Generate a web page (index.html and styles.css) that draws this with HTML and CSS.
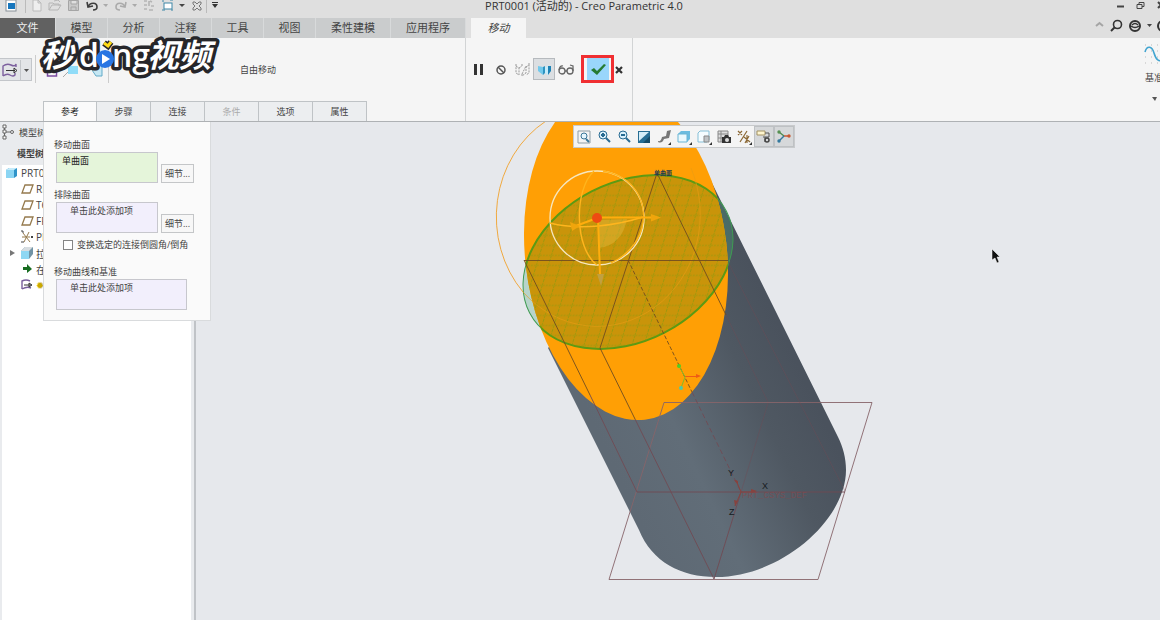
FILE: index.html
```html
<!DOCTYPE html>
<html lang="zh-CN">
<head>
  <meta charset="UTF-8" />
  <meta name="viewport" content="width=device-width, initial-scale=1.0" />
  <title>PRT0001 (活动的) - Creo Parametric 4.0</title>
  <link rel="stylesheet" href="styles.css">
</head>
<body>
<div class="app">
  <header class="titlebar">
    <div class="quick">
      <svg width="222" height="18" viewBox="8 0 222 18" fill="none">
        <rect x="6" y="0" width="10" height="11" fill="#fff" stroke="#8a9299"/>
        <rect x="8" y="3" width="7" height="6" fill="#1676bd"/>
        <path d="M25.500 0V13M206.500 0V13" stroke="#bbb"/>
        <path d="M33 0h5l3 3v8h-8zM38 0v3h3" fill="#eee" stroke="#bbb"/>
        <path d="M49 10V3h4l1 1h5v2M49 10l3-5h9l-3 5zM54 1l4-1 2 2" stroke="#b5b5b5"/>
        <path d="M68.500 .5h10v10h-10zM71 1v3h6V1M71 11V7h5v4" fill="#c9c9c9" stroke="#a5a5a5"/>
        <path d="M88 7c2-5 9-5 9 0 0 2-2 3-4 3M87 2l1 5 5-1" stroke="#3d3d3d" stroke-width="1.600"/>
        <path d="M125 7c-2-5-9-5-9 0 0 2 2 3 4 3M126 2l-1 5-5-1" stroke="#aaa" stroke-width="1.600"/>
        <path d="M103 4h5l-2 3zM132 4h5l-2 3z" fill="#aaa"/>
        <path d="M144 1h3M144 5h3M144 9h3M149 1v5M149 10h4M152 2l-2-1M151 6h3" stroke="#b5b5b5" stroke-width="1.600"/>
        <rect x="164" y="3" width="8" height="6" fill="#fff" stroke="#3e87a7"/>
        <path d="M162 1h2M170 0h3M162 10h3M171 10h2" stroke="#3e87a7"/>
        <path d="M179 4h6l-3 3z" fill="#444"/>
        <path d="M193 2h2l2 2 2-2h2v2l-2 2 2 2v2h-2l-2-2-2 2h-2V8l2-2-2-2z" stroke="#777"/>
        <path d="M212 4h6l-3 4zM212 2h6v1h-6z" fill="#333"/>
      </svg>
    </div>
    <h1>PRT0001 (活动的) - Creo Parametric 4.0</h1>
    <div class="window-tools">
      <svg width="48" height="12" viewBox="1112 0 48 12" fill="none" stroke="#444">
        <path d="M1117 6.500h7" stroke-width="2"/>
        <path d="M1137 4.500h5v4h-5zM1139 4V2.500h5v4h-2"/>
        <path d="M1158 2l6 6M1158 8l6-6" stroke-width="2"/>
      </svg>
    </div>
  </header>

  <nav class="tabs">
    <button class="tab file">文件</button>
    <button class="tab">模型</button>
    <button class="tab">分析</button>
    <button class="tab">注释</button>
    <button class="tab">工具</button>
    <button class="tab">视图</button>
    <button class="tab wide">柔性建模</button>
    <button class="tab wide">应用程序</button>
    <button class="tab active">移动</button>
    <svg class="tab-tools" width="68" height="18" viewBox="1092 18 68 18" fill="none" stroke="#333">
      <path d="M1096 26l3.500-3 3.500 3" stroke="#a5a5a5" stroke-width="2"/>
      <circle cx="1117.500" cy="24.500" r="4" stroke-width="1.600"/>
      <path d="M1115 27l-4 4" stroke-width="2"/>
      <circle cx="1135" cy="26" r="5" stroke-width="2"/>
      <path d="M1131 26q4 3 8 0M1132 25q3-3 6 0" stroke-width="1.500"/>
      <path d="M1147 24h5l-2.500 3z" fill="#444" stroke="none"/>
      <circle cx="1163" cy="26" r="5" stroke-width="2"/>
    </svg>
  </nav>

  <section class="ribbon">
    <div class="group options">
      <div class="row">
        <button class="type-button" aria-label="移动类型">
          <svg width="32" height="22" viewBox="0 58 32 22" fill="none">
            <path d="M20.500 59v20" stroke="#c3c6ca"/>
            <path d="M3 75V65q4-3 8-1t5-1v3M3 75q4-3 7-1t5 0v-2" stroke="#7d619f" stroke-width="1.400"/>
            <path d="M6 69.500h9M14 67l3 2.500-3 2.500z" stroke="#333"/>
            <path d="M24 68h5l-2.500 3z" fill="#555"/>
          </svg>
        </button>
        <svg width="76" height="28" viewBox="34 55 76 28" fill="none">
          <path d="M35.500 55v28M108.500 55v28" stroke="#ccc"/>
          <path d="M47.500 68v8h9v-8z" stroke="#7b4ca0" stroke-width="1.500"/>
          <path d="M63 77l5-5" stroke="#aaa"/>
          <path d="M68 66h10v8h-10z" fill="#90dcf8"/>
          <path d="M92 70l4 6h6V67" fill="#c6e7f3" stroke="#63abc9"/>
        </svg>
        <span class="mode">自由移动</span>
      </div>
      <div class="subtabs">
        <button class="subtab current">参考</button>
        <button class="subtab">步骤</button>
        <button class="subtab">连接</button>
        <button class="subtab" disabled>条件</button>
        <button class="subtab">选项</button>
        <button class="subtab">属性</button>
      </div>
    </div>

    <div class="group controls">
      <div class="row">
        <button class="tool" aria-label="暂停"><svg width="22" height="22"><path d="M7 6h3v11H7zM13 6h3v11h-3z" fill="#333"/></svg></button>
        <button class="tool" aria-label="无预览"><svg width="22" height="22" fill="none" stroke="#555" stroke-width="1.500"><circle cx="12" cy="12" r="4"/><path d="M9 9l6 6"/></svg></button>
        <button class="tool" aria-label="分离预览"><svg width="22" height="22" fill="none" stroke="#999"><path d="M5 8l3 2v7l-3-2zM8 10l3-2M11 16l4-8v7l-4 3zM15 9l3-2v8l-3 2M4 7h2M10 7h2M17 6h2" stroke-dasharray="2 1"/></svg></button>
        <button class="tool pressed" aria-label="连接预览"><svg width="20" height="20"><path d="M4 7l5 1v8l-5-4z" fill="#72c9ec"/><path d="M9 8l2-1v7l-2 2z" fill="#2e93c0"/><path d="M11 8l3-1v9l-3-2z" fill="#c5ecfa"/><path d="M14 7h3v5l-3 4z" fill="#1e82b5"/></svg></button>
        <button class="tool" aria-label="预览"><svg width="22" height="22" fill="none" stroke="#666" stroke-width="1.300"><circle cx="7" cy="13" r="3"/><circle cx="15" cy="13" r="3"/><path d="M4 12q1-5 4-4M18 13V8l-3-1M10 13h2"/></svg></button>
        <div class="confirm">
          <button class="accept" aria-label="确定"><svg width="22" height="22"><path d="M4 12l3-2 3 3 7-7 2 1-9 10z" fill="#267b32"/></svg></button>
        </div>
        <button class="cancel" aria-label="取消"><svg width="10" height="12"><path d="M2 4l6 6M8 4l-6 6" stroke="#333" stroke-width="2.200"/></svg></button>
      </div>
    </div>

    <div class="group datum">
      <svg width="22" height="22" viewBox="1143 43 22 22" fill="none">
        <path d="M1145 45h18M1145 51h18M1145 57h18M1145 63h18" stroke="#bbb" stroke-dasharray="1 5"/>
        <path d="M1145 52c2-7 7-6 9 1s5 9 9 7" stroke="#43a5d0" stroke-width="1.600"/>
      </svg>
      <span>基准</span>
      <svg width="22" height="8"><path d="M9 1h5l-2 4z" fill="#555"/></svg>
    </div>
  </section>

  <main class="work">
    <aside class="tree">
      <div class="tree-tab">
        <svg width="15" height="16" fill="none" stroke="#666"><path d="M4.500 3v10M6 8h4"/><path d="M3 1h3v3H3zM3 6h3v3H3zM3 12h3v3H3z" fill="#fff"/><circle cx="12" cy="8" r="1.500"/></svg>
        模型树
      </div>
      <div class="tree-title">模型树</div>
      <ul>
        <li class="root"><svg width="16" height="16"><path d="M3 5l3-2h8v8l-3 2H3z" fill="#2f94c9"/><path d="M3 5h8v8H3z" fill="#8bd5f3"/><path d="M3 5l3-2h8l-3 2z" fill="#c4ebfa"/></svg>PRT0001.PRT</li>
        <li><svg width="16" height="16" fill="none" stroke="#957a4d" stroke-width="1.300"><path d="M6 4h8l-3 8H3z"/></svg>RIGHT</li>
        <li><svg width="16" height="16" fill="none" stroke="#957a4d" stroke-width="1.300"><path d="M6 4h8l-3 8H3z"/></svg>TOP</li>
        <li><svg width="16" height="16" fill="none" stroke="#957a4d" stroke-width="1.300"><path d="M6 4h8l-3 8H3z"/></svg>FRONT</li>
        <li><svg width="16" height="16" fill="none" stroke="#957a4d"><path d="M4 4l7 9M10 3l-5 10M3 8h8"/><path d="M2 2h2v2M2 13h3M12 7l2 2M14 7l-2 2" stroke="#444"/></svg>PRT_CSYS_DEF</li>
        <li class="parent"><svg width="9" height="16"><path d="M1 5l5 3-5 3z" fill="#777"/></svg><svg width="16" height="16"><path d="M2 6l4-4h8v7l-4 5H2z" fill="#7193a5"/><path d="M2 6h8v8H2z" fill="#8ed7f3"/><path d="M2 6l4-4h8l-4 4z" fill="#d7dde1"/></svg>拉伸 1</li>
        <li><svg width="16" height="16"><path d="M4 6h4V3l5 5-5 4v-3H4z" fill="#176c20"/></svg>在此插入</li>
        <li><svg width="16" height="16" fill="none"><path d="M3 12V4q4-2 8 0M3 12q5-3 9-1" stroke="#79609c" stroke-width="1.400"/><path d="M5 8h7M10 6l3 2-3 2z" stroke="#333"/></svg><span class="star">✹</span>移动 1</li>
      </ul>
    </aside>

    <section class="canvas">
      <svg class="model" viewBox="196 122 964 498" preserveAspectRatio="xMidYMin meet" fill="none">
        <defs>
          <linearGradient id="steel" gradientUnits="userSpaceOnUse" x1="610" y1="460" x2="800" y2="370">
            <stop offset="0" stop-color="#5e6974"/>
            <stop offset=".35" stop-color="#616d78"/>
            <stop offset=".75" stop-color="#4f5862"/>
            <stop offset="1" stop-color="#4a525d"/>
          </linearGradient>
          <pattern id="mesh" width="12" height="10" patternUnits="userSpaceOnUse" patternTransform="skewX(-17)">
            <path d="M0 5.500h12M5.500 0v10" stroke="#6d9d10" stroke-opacity=".6" stroke-width=".8" stroke-dasharray="2 1"/>
          </pattern>
          <clipPath id="face"><ellipse cx="626" cy="254" rx="166.700" ry="100.900" transform="rotate(83.500 626 254)"/></clipPath>
          <clipPath id="cut"><ellipse cx="628" cy="262" rx="110.800" ry="79.400" transform="rotate(-27.300 628 262)"/></clipPath>
        </defs>

        <!-- cylinder body -->
        <path d="M548 348L639 530C652 562 681 577 716 577C781 577 846 520 846 470C846 458 843 447 838 437L711 181z" fill="url(#steel)"/>
        <ellipse cx="628" cy="262" rx="110.800" ry="79.400" transform="rotate(-27.300 628 262)" fill="#4ba77c" fill-opacity=".3" stroke="#3f9c52"/>
        <!-- slanted face -->
        <ellipse cx="626" cy="254" rx="166.700" ry="100.900" transform="rotate(83.500 626 254)" fill="#ff9f05"/>
        <g clip-path="url(#face)">
          <ellipse cx="628" cy="262" rx="110.800" ry="79.400" transform="rotate(-27.300 628 262)" fill="#c9940a" stroke="#5c9a13" stroke-width="2"/>
          <g clip-path="url(#cut)">
            <path d="M520 170h216v182H520z" fill="url(#mesh)"/>
          </g>
        </g>
        <path d="M546 121A103 112 0 0 0 523 292" stroke="#f0a12d" stroke-width=".9"/>
        <path d="M523 292A103 112 0 0 0 691 168" stroke="#e89c14" stroke-opacity=".7" stroke-width=".9"/>

        <!-- datum planes and axis -->
        <g stroke="#704d20" stroke-width=".9">
          <path d="M524 260.500h204M657 173l-57 175M657 173l69 142M524 260l66 135M600 348l35 71"/>
          <path d="M628 260l64 132" stroke-dasharray="4 2"/>
        </g>
        <g stroke="#714b54" stroke-width=".9">
          <path d="M664 402.500h208L818 579.500H609z" stroke="#87646a"/>
          <path d="M590 395l47 97h208M635 419l79 160 27-87"/>
          <path d="M741 492l27-89M728 262l117 229M726 315l42 87" stroke-opacity=".45"/>
          <path d="M692 392l49 100" stroke-dasharray="5 3"/>
        </g>

        <!-- 3D dragger -->
        <path d="M598 220l29-1q-5 26-28 29z" fill="#e6bd43" fill-opacity=".4"/>
        <circle cx="597" cy="218" r="47" stroke="#f6e7c0" stroke-width="1.300"/>
        <path d="M594 171c-20 18-20 77 3 94M603 171c50 8 55 70 8 92M550 223c30 8 68 2 93-6" stroke="#ffb51d" stroke-width="1.400"/>
        <path d="M597 217.500h56M598 218l2 56M597 218l-24 9" stroke="#ffad0d" stroke-width="2"/>
        <path d="M651 214l10 3.500-10 4zM570 222l10 4-8 5z" fill="#f0a50c"/>
        <path d="M597 274h7l-3 12z" fill="#c0a041"/>
        <circle cx="597" cy="218" r="5" fill="#ee4b12"/>

        <!-- coordinate systems -->
        <path d="M685 376.500h12" stroke="#ee5b16"/><path d="M696 374l5 2-5 2z" fill="#ee5b16"/>
        <path d="M679 366l6 11-4 11" stroke="#80bd29"/>
        <circle cx="679" cy="366" r="2" fill="#4fcd25"/><circle cx="681" cy="388" r="2" fill="#50c9a4"/>
        <path d="M741 492l-5-12M741 492h15M741 492l-6 14" stroke="#87433f"/>
        <path d="M751 489l6 2-6 2zM734 480l4 1v4zM734 500l4 1-3 5z" fill="#87433f"/>
        <g class="axis-label">
          <text x="728" y="476">Y</text>
          <text x="762" y="489">X</text>
          <text x="729" y="515">Z</text>
        </g>
        <text class="csys-label" x="742" y="498">PRT_CSYS_DEF</text>
        <text class="surface-label" x="654" y="175">单曲面</text>

        <path d="M992 249v11l3-2 2 5 2-1-2-5h3z" fill="#111" stroke="#fff" stroke-width=".5"/>
      </svg>

      <div class="view-tools">
        <button aria-label="重新调整"><svg width="18" height="18" fill="none"><path d="M3 3h12v12H3z" stroke="#8e9da5"/><circle cx="9" cy="8" r="3" fill="#e5f5fd" stroke="#397596"/><path d="M11 11l3 3" stroke="#397596" stroke-width="2"/></svg></button>
        <button aria-label="放大"><svg width="18" height="18" fill="none" stroke="#286a91"><circle cx="8" cy="7" r="4" fill="#daf0fb"/><path d="M6 7h4M8 5v4M11 10l4 4" stroke-width="2"/></svg></button>
        <button aria-label="缩小"><svg width="18" height="18" fill="none" stroke="#286a91"><circle cx="8" cy="7" r="4" fill="#daf0fb"/><path d="M6 7h4M11 10l4 4" stroke-width="2"/></svg></button>
        <button aria-label="重画"><svg width="18" height="18"><path d="M3 3h12v12H3z" fill="#276d93"/><path d="M4 4h10L4 13z" fill="#d4edf8"/><path d="M15 8v7H8z" fill="#174c69"/></svg></button>
        <button aria-label="渲染选项"><svg width="18" height="18"><path d="M3 13q3 1 4-4l4-1 1-5 4-1-2 8-5 1q-2 5-6 3z" fill="#777"/><path d="M16 14v3h-3z" fill="#333"/></svg></button>
        <button aria-label="显示样式"><svg width="18" height="18"><path d="M3 6l3-3h9v8l-3 3H3z" fill="#6bbce0"/><path d="M3 6h9v8H3z" fill="#eaf8fd" stroke="#6bb5d4"/><path d="M17 14v3h-3z" fill="#333"/></svg></button>
        <button aria-label="已保存方向"><svg width="18" height="18" fill="none"><path d="M3 5l2-2h9v9l-2 2H3z" fill="#f5fcff" stroke="#86bfd7"/><path d="M9 8h5v6H9z" fill="#bfc3c6" stroke="#888"/><path d="M17 14v3h-3z" fill="#333"/></svg></button>
        <button aria-label="视图管理器"><svg width="18" height="18"><path d="M3 3h10v11H3z" fill="#ddd" stroke="#888"/><path d="M3 6h10M3 10h10M6 3v11" stroke="#888"/><path d="M7 9h2l1-2h3l1 2h2v6H7z" fill="#333"/><circle cx="12" cy="12" r="2" fill="#ddd"/></svg></button>
        <button aria-label="基准显示"><svg width="18" height="18" fill="none" stroke="#8b6835"><path d="M3 3l4 4M7 3L3 7M5 14l7-11M9 9l6 5M14 8l-4 7M12 7v8" stroke-width="1.200"/><path d="M17 14v3h-3z" fill="#333" stroke="none"/></svg></button>
        <button class="on" aria-label="注释显示"><svg width="18" height="18" fill="none"><path d="M2 3h8v4H2z" fill="#fff6cf" stroke="#a39264"/><path d="M10 5h4v4H8M10 9v5" stroke="#555"/><circle cx="12" cy="12" r="2" stroke="#444" stroke-width="1.500"/></svg></button>
        <button class="on" aria-label="旋转中心"><svg width="18" height="18" fill="none"><path d="M4 4l5 4" stroke="#4c8c4d" stroke-width="1.500"/><path d="M9 8h6" stroke="#c85832" stroke-width="1.500"/><path d="M9 8l-5 5" stroke="#34799e" stroke-width="1.500"/><circle cx="4" cy="4" r="1.700" fill="#569052"/><circle cx="14" cy="8" r="1.700" fill="#c85832"/><circle cx="4" cy="13" r="1.700" fill="#34799e"/></svg></button>
      </div>
    </section>

    <form class="panel">
      <label for="move-surface">移动曲面</label>
      <div class="field">
        <textarea id="move-surface" class="filled" readonly>单曲面</textarea>
        <button type="button">细节...</button>
      </div>
      <label for="exclude-surface">排除曲面</label>
      <div class="field">
        <textarea id="exclude-surface" readonly>单击此处添加项</textarea>
        <button type="button">细节...</button>
      </div>
      <label class="check"><input type="checkbox">变换选定的连接倒圆角/倒角</label>
      <label for="move-curve">移动曲线和基准</label>
      <div class="field">
        <textarea id="move-curve" class="long" readonly>单击此处添加项</textarea>
      </div>
    </form>
  </main>

  <svg class="watermark" width="182" height="52" viewBox="38 32 182 52">
    <g class="brand">
      <text x="41" y="67" class="cjk">秒</text>
      <text x="79" y="67" class="latin">d</text>
      <text x="112" y="67" class="latin">ng</text>
      <text x="147" y="67" class="cjk">视频</text>
    </g>
    <circle cx="105" cy="59" r="9" fill="#2876e3"/>
    <path d="M102 54v10l8-5z" fill="#fff"/>
    <path d="M104 43l4 3 3-4" fill="none" stroke="#26262a" stroke-width="6"/>
    <path d="M104 43l4 3 3-4" fill="none" stroke="#ffdc17" stroke-width="3"/>
  </svg>
</div>
</body>
</html>
```

FILE: styles.css
```css
* {
  box-sizing: border-box;
}
body {
  margin: 0;
  font-family: "Open Sans", "Noto Sans CJK SC", sans-serif;
  font-size: 9px;
  color: #444;
  background: #e6e8ec;
}
button {
  font: inherit;
  color: inherit;
  padding: 0;
  margin: 0;
  border: 0;
  background: transparent;
}
svg {
  display: block;
  flex-shrink: 0;
}
.app {
  position: relative;
  display: flex;
  flex-direction: column;
  height: 100vh;
  overflow: hidden;
}

/* title bar */
.titlebar {
  display: grid;
  grid-template-columns: 1fr auto 1fr;
  height: 18px;
  padding-left: 8px;
  background: #dfdfdf;
}
.quick svg {
  overflow: visible;
}
.titlebar h1 {
  margin: 0;
  font-size: 11px;
  line-height: 12px;
  font-weight: normal;
  color: #333;
  white-space: nowrap;
}
.window-tools {
  justify-self: end;
}

/* ribbon tabs */
.tabs {
  display: flex;
  height: 20px;
  background: #dfdfdf;
}
.tab {
  width: 52px;
  font-size: 11px;
  line-height: 18px;
  background: #cacccd;
  border-right: 1px solid #d8dadb;
}
.tab.file {
  width: 56px;
  color: #eee;
  background: #616161;
}
.tab.wide {
  width: 75px;
}
.tab.active {
  width: 55px;
  margin-left: 5px;
  font-style: italic;
  background: #f5f5f5;
  border: 0;
}
.tab-tools {
  margin-left: auto;
}

/* ribbon */
.ribbon {
  display: flex;
  height: 84px;
  background: #f5f5f5;
  border-bottom: 1px solid #aeb1b4;
  overflow: hidden;
}
.group {
  display: flex;
  flex-direction: column;
  padding-top: 17px;
}
.row {
  display: flex;
  align-items: center;
  height: 28px;
}
.options {
  width: 466px;
  border-right: 1px solid #d2d4d5;
}
.type-button {
  width: 32px;
  height: 23px;
  margin-right: 2px;
  background: #e3e5e8;
  border: 1px solid #c3c6ca;
  border-left: 0;
}
.mode {
  margin-left: 130px;
}
.subtabs {
  display: flex;
  margin-top: auto;
  padding-left: 43px;
}
.subtab {
  width: 54px;
  height: 20px;
  background: #eceef0;
  border: 1px solid #bfc3c6;
  border-bottom: 0;
  border-left-width: 0;
}
.subtab.current {
  color: #222;
  background: #fafafa;
  border-left-width: 1px;
}
.subtab:disabled {
  color: #aaa;
}
.controls {
  width: 167px;
  padding-left: 1px;
  border-right: 1px solid #d2d4d5;
}
.tool {
  width: 22px;
  height: 22px;
}
.tool.pressed {
  background: #dcdfe2;
  border: 1px solid #b6babe;
}
.confirm {
  display: flex;
  align-items: center;
  justify-content: center;
  width: 33px;
  height: 28px;
  margin-left: 4px;
  border: 3px solid #f02f32;
}
.accept {
  width: 22px;
  height: 22px;
  background: #99d6fb;
}
.datum {
  width: 17px;
  margin-left: auto;
  padding-top: 5px;
  white-space: nowrap;
}
.datum span {
  margin: 6px 2px 12px;
}

/* model tree */
.work {
  position: relative;
  display: flex;
  flex: 1;
  min-height: 0;
}
.tree {
  display: flex;
  flex-direction: column;
  width: 196px;
  background: #e9ebee;
  border-right: 2px solid #c0c3c7;
}
.tree-tab {
  display: flex;
  align-items: center;
  gap: 4px;
  height: 20px;
}
.tree-title {
  height: 23px;
  padding-left: 17px;
  line-height: 23px;
  font-weight: bold;
}
.tree ul {
  flex: 1;
  margin: 0 3px 0 2px;
  padding: 0;
  list-style: none;
  background: #fff;
}
.tree li {
  display: flex;
  align-items: center;
  width: 41px;
  height: 16px;
  padding-left: 17px;
  gap: 1px;
  font-size: 10px;
  white-space: nowrap;
  overflow: hidden;
}
.tree .root {
  padding-left: 1px;
  gap: 2px;
}
.tree .parent {
  padding-left: 7px;
}
.star {
  color: #c9a900;
}

/* graphics area */
.canvas {
  position: relative;
  flex: 1;
  min-width: 0;
  background: #e6e8ec;
}
.model {
  width: 100%;
  height: 100%;
}
.axis-label {
  font: 9px "Liberation Sans", sans-serif;
  fill: #151a20;
}
.csys-label {
  font: 9px "Liberation Mono", monospace;
  fill: #85484c;
  fill-opacity: .7;
}
.surface-label {
  font-size: 6px;
  font-weight: bold;
  fill: #243c50;
}
.view-tools {
  position: absolute;
  top: 3px;
  left: 377px;
  display: flex;
  gap: 2px;
  padding: 1px;
  background: #f4f4f4;
  border: 1px solid #c8cacc;
}
.view-tools button {
  width: 18px;
  height: 19px;
}
.view-tools .on {
  background: #d6d8da;
  outline: 1px solid #bec1c4;
}

/* reference panel */
.panel {
  position: absolute;
  top: 0;
  left: 43px;
  width: 168px;
  padding: 15px 12px 6px;
  background: #fafafa;
  border: 1px solid #d9dbdd;
  border-top: 0;
}
.panel label {
  display: block;
  line-height: 15px;
  margin-left: -2px;
}
.field {
  display: flex;
  align-items: flex-end;
  gap: 3px;
  margin-bottom: 4px;
}
.field textarea {
  display: block;
  width: 102px;
  height: 31px;
  padding: 1px 13px;
  font: inherit;
  line-height: 13px;
  color: #444;
  background: #f2effc;
  border: 1px solid #c7c7cd;
  border-radius: 0;
  resize: none;
  overflow: hidden;
}
.field .filled {
  padding-left: 5px;
  color: #222;
  background: #e5f5da;
}
.field .long {
  width: 131px;
}
.field button {
  width: 33px;
  height: 19px;
  background: #f7f7f7;
  border: 1px solid #c4c6c8;
}
.panel .check {
  display: flex;
  align-items: center;
  gap: 4px;
  margin: 4px 0 12px 7px;
  white-space: nowrap;
}
.check input {
  appearance: none;
  width: 10px;
  height: 10px;
  margin: 0;
  background: #fff;
  border: 1px solid #858585;
}

/* video watermark */
.watermark {
  position: absolute;
  top: 32px;
  left: 38px;
  overflow: visible;
  pointer-events: none;
}
.brand {
  fill: #fff;
  stroke: #26262a;
  stroke-width: 7px;
  stroke-linejoin: round;
  paint-order: stroke;
}
.cjk {
  font-family: "Noto Sans CJK SC", sans-serif;
  font-size: 32px;
  font-style: italic;
  font-weight: bold;
}
.latin {
  font-family: "Open Sans", sans-serif;
  font-size: 32px;
  font-weight: 600;
}
```
